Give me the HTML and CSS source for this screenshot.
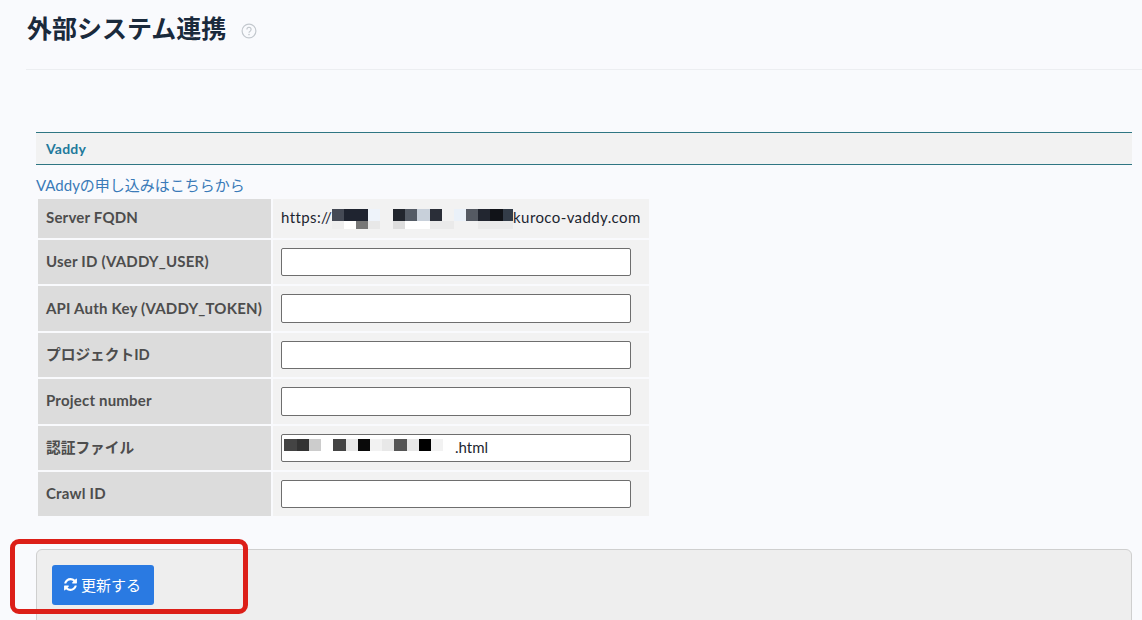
FILE: index.html
```html
<!DOCTYPE html>
<html lang="ja">
<head>
<meta charset="utf-8">
<title>外部システム連携</title>
<link rel="stylesheet" href="styles.css">
</head>
<body>
<header class="page-head">
  <h1>外部システム連携</h1>
  <svg class="help" viewBox="0 0 16 16" width="16" height="16" aria-hidden="true">
    <circle cx="8" cy="8" r="6.9" fill="none" stroke="#c3c8ce" stroke-width="1.2"/>
    <path d="M5.9 6.4a2.1 2.1 0 1 1 3.2 1.8c-.7.4-1.1.8-1.1 1.5" fill="none" stroke="#c3c8ce" stroke-width="1.2"/>
    <circle cx="8" cy="11.6" r=".8" fill="#c3c8ce"/>
  </svg>
</header>
<main class="content">
  <h2 class="section-title">Vaddy</h2>
  <a class="apply-link" href="#">VAddyの申し込みはこちらから</a>
  <table class="settings">
    <tr class="row-fqdn">
      <th>Server FQDN</th>
      <td class="fqdn">https://<svg class="mosaic" width="181" height="20" viewBox="0 0 181 20" aria-hidden="true">
        <rect x="0" y="0" width="12" height="12" fill="#454a55"/>
        <rect x="12" y="0" width="24" height="12" fill="#1f2430"/>
        <rect x="36" y="0" width="12" height="12" fill="#eef3fa"/>
        <rect x="61" y="0" width="12" height="12" fill="#22262e"/>
        <rect x="73" y="0" width="12" height="12" fill="#555c66"/>
        <rect x="85" y="0" width="13" height="12" fill="#c8d0da"/>
        <rect x="98" y="0" width="12" height="12" fill="#2a2e38"/>
        <rect x="122" y="0" width="12" height="12" fill="#eaf1f9"/>
        <rect x="134" y="0" width="12" height="12" fill="#555a63"/>
        <rect x="146" y="0" width="12" height="12" fill="#222630"/>
        <rect x="158" y="0" width="13" height="12" fill="#111318"/>
        <rect x="171" y="0" width="10" height="12" fill="#333c48"/>
        <rect x="0" y="12" width="12" height="8" fill="#eeeeee"/>
        <rect x="12" y="12" width="12" height="8" fill="#ffffff"/>
        <rect x="24" y="12" width="12" height="8" fill="#777777"/>
        <rect x="36" y="12" width="12" height="8" fill="#e8e8e8"/>
        <rect x="61" y="12" width="12" height="8" fill="#dddddd"/>
        <rect x="73" y="12" width="25" height="8" fill="#ffffff"/>
        <rect x="98" y="12" width="24" height="8" fill="#eaeaea"/>
        <rect x="146" y="12" width="35" height="8" fill="#eaeaea"/>
      </svg>kuroco-vaddy.com</td>
    </tr>
    <tr><th>User ID (VADDY_USER)</th><td><input class="field" type="text"></td></tr>
    <tr><th>API Auth Key (VADDY_TOKEN)</th><td><input class="field" type="text"></td></tr>
    <tr><th class="ja">プロジェクトID</th><td><input class="field" type="text"></td></tr>
    <tr><th>Project number</th><td><input class="field" type="text"></td></tr>
    <tr>
      <th class="ja">認証ファイル</th>
      <td class="file-cell">
        <input class="field field-file" type="text" value=".html">
        <svg class="mosaic-file" width="160" height="12" viewBox="0 0 160 12" aria-hidden="true">
          <rect x="0" y="0" width="13" height="12" fill="#444444"/>
          <rect x="13" y="0" width="12" height="12" fill="#333333"/>
          <rect x="25" y="0" width="12" height="12" fill="#cccccc"/>
          <rect x="49" y="0" width="13" height="12" fill="#444444"/>
          <rect x="62" y="0" width="12" height="12" fill="#e8e8e8"/>
          <rect x="74" y="0" width="12" height="12" fill="#0a0a0a"/>
          <rect x="86" y="0" width="12" height="12" fill="#f2f2f2"/>
          <rect x="98" y="0" width="12" height="12" fill="#e8e8e8"/>
          <rect x="110" y="0" width="13" height="12" fill="#555555"/>
          <rect x="123" y="0" width="12" height="12" fill="#e8e8e8"/>
          <rect x="135" y="0" width="12" height="12" fill="#000000"/>
          <rect x="147" y="0" width="12" height="12" fill="#f2f2f2"/>
        </svg>
      </td>
    </tr>
    <tr><th>Crawl ID</th><td><input class="field" type="text"></td></tr>
  </table>
  <div class="form-actions">
    <button class="btn-update" type="button">
      <svg width="15" height="15" viewBox="0 0 1792 1792" aria-hidden="true"><path fill="#fff" d="M1639 1056q0 5-1 7-64 268-268 434.5t-478 166.5q-146 0-282.5-55t-243.5-157l-129 129q-19 19-45 19t-45-19-19-45v-448q0-26 19-45t45-19h448q26 0 45 19t19 45-19 45l-137 137q71 66 161 102t187 36q134 0 250-65t186-179q11-17 53-117 8-23 30-23h192q13 0 22.5 9.5t9.5 22.5zm25-800v448q0 26-19 45t-45 19h-448q-26 0-45-19t-19-45 19-45l138-138q-148-137-349-137-134 0-250 65t-186 179q-11 17-53 117-8 23-30 23h-199q-13 0-22.5-9.5t-9.5-22.5v-7q65-268 270-434.5t480-166.5q146 0 284 55.5t245 156.5l130-129q19-19 45-19t45 19 19 45z"/></svg>
      <span>更新する</span>
    </button>
    <div class="callout" aria-hidden="true"></div>
  </div>
</main>
</body>
</html>
```

FILE: styles.css
```css
html, body {
  margin: 0;
  height: 620px;
  overflow: hidden;
}
body {
  background: #f9fafd;
  color: #1c2530;
  font-family: Lato, "Noto Sans CJK JP", sans-serif;
  font-size: 14px;
}
.page-head {
  margin-left: 26px;
  height: 69px;
  border-bottom: 1px solid #eceef1;
  display: flex;
  align-items: flex-start;
  gap: 15px;
}
.page-head h1 {
  margin: 9px 0 0 1px;
  font-size: 25px;
  line-height: 38px;
  font-weight: 700;
  color: #1a2a3c;
}
.help {
  margin-top: 23px;
}
.content {
  padding: 62px 10px 0 36px;
}
.section-title {
  margin: 0;
  height: 31px;
  padding-left: 10px;
  border-top: 1px solid #2f7683;
  border-bottom: 1px solid #2f7683;
  background: #f2f2f2;
  color: #1f7a9c;
  font-size: 14px;
  font-weight: 700;
  letter-spacing: .2px;
  line-height: 31px;
}
.apply-link {
  display: block;
  margin-top: 10px;
  height: 23px;
  line-height: 20px;
  color: #3a7ab8;
  font-size: 15px;
  text-decoration: none;
}
.settings {
  border-collapse: separate;
  border-spacing: 2px;
  margin-top: -1px;
  width: 615px;
  table-layout: fixed;
}
.settings tr {
  height: 44.4px;
}
.settings tr.row-fqdn {
  height: 39px;
}
.settings th {
  width: 217px;
  padding: 0 8px 2px;
  background: #dcdcdc;
  color: #4d4d4d;
  font-size: 15px;
  font-weight: 700;
  letter-spacing: .2px;
  text-align: left;
  white-space: nowrap;
}
.settings th.ja {
  font-size: 14.7px;
  letter-spacing: 0;
}
.settings tr.row-fqdn th {
  padding-bottom: 3px;
}
.settings td {
  padding: 0 8px;
  background: #f2f2f2;
}
.fqdn {
  white-space: nowrap;
  font-size: 15px;
  letter-spacing: .4px;
}
.mosaic {
  vertical-align: -6px;
}
.field {
  display: block;
  box-sizing: border-box;
  width: 350px;
  height: 28.5px;
  padding: 0 8px 2px;
  background: #fff;
  border: 1px solid #6e6e6e;
  border-radius: 2px;
  font-family: inherit;
  font-size: 15px;
  color: #1c2530;
}
.file-cell {
  position: relative;
}
.field-file {
  padding-left: 173px;
}
.mosaic-file {
  position: absolute;
  left: 11px;
  top: 13px;
}
.form-actions {
  position: relative;
  box-sizing: border-box;
  height: 120px;
  margin-top: 31px;
  padding: 15px;
  background: #eeeeee;
  border: 1px solid #cfcfcf;
  border-radius: 6px;
}
.btn-update {
  display: flex;
  align-items: center;
  gap: 3px;
  box-sizing: border-box;
  width: 102px;
  height: 40px;
  padding: 0 0 2px 11px;
  border: 0;
  border-radius: 3px;
  background: #2a7ae2;
  color: #fff;
  font-family: inherit;
  font-size: 15px;
}
.callout {
  position: absolute;
  left: -27px;
  top: -11px;
  box-sizing: border-box;
  width: 238px;
  height: 75px;
  border: 5px solid #dc1f18;
  border-radius: 9px;
}
```
